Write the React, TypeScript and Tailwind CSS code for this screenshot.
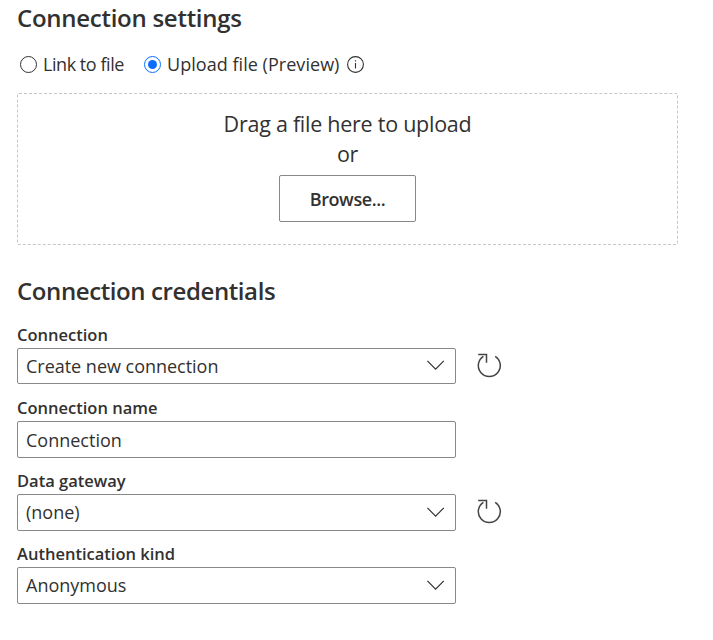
import type { ReactNode } from "react";

function Text({ children, className }: { children: ReactNode; className: string }) {
  return <span className={`block whitespace-nowrap ${className}`}>{children}</span>;
}

function InfoIcon() {
  return (
    <svg width="17" height="17" viewBox="0 0 17 17" fill="none" stroke="#323130" className="ml-[7px] shrink-0">
      <circle cx="8.5" cy="8.5" r="7.9" strokeWidth="1.1" />
      <path d="M8.5 7v5.5M8.5 4.2v1.4" strokeWidth="1.1" />
    </svg>
  );
}

function Chevron({ className }: { className: string }) {
  return (
    <svg width="18" height="11" viewBox="0 0 18 11" fill="none" stroke="#323130" strokeWidth="1.2" className={`mr-[10px] shrink-0 ${className}`}>
      <path d="M.4 .9L8.6 9.2L16.8 .9" />
    </svg>
  );
}

function Refresh() {
  return (
    <svg width="26" height="26" viewBox="0 0 26 26" fill="none" stroke="#454442" strokeWidth="1.5" className="mb-[3px] ml-[20px] shrink-0">
      <path d="M7.4 4.3A11 11 0 1 0 19.2 4.3" />
      <path d="M2.2 2.6H10.5V10.8" />
    </svg>
  );
}

type FieldProps = {
  label: string;
  value: string;
  valueClass?: string;
  boxClass: string;
  chevronClass?: string;
  select?: boolean;
  refresh?: boolean;
};

function Field({ label, value, valueClass = "", boxClass, chevronClass = "", select, refresh }: FieldProps) {
  return (
    <div className="h-[73px]">
      <Text className="h-[24px] text-[16.5px] leading-[22px] font-semibold">{label}</Text>
      <div className="flex items-center">
        <div className={`flex w-[439px] items-center justify-between rounded-[2px] border border-[#8a8886] pl-[8px] ${boxClass}`}>
          <Text className={`text-[18px] leading-[24px] ${valueClass}`}>{value}</Text>
          {select && <Chevron className={chevronClass} />}
        </div>
        {refresh && <Refresh />}
      </div>
    </div>
  );
}

export default function App() {
  return (
    <main className="h-[640px] w-[713px] overflow-hidden bg-white pl-[17px] font-['Open_Sans','Noto_Sans',sans-serif] text-[#323130]">
      <h2 className="h-[38px] pt-[2px] text-[24px] leading-[32px] font-semibold whitespace-nowrap tracking-[-0.27px]">Connection settings</h2>
      <div className="flex h-[53px] items-center pl-[3px]">
        <span className="size-[17px] rounded-full border border-[#323130]" />
        <Text className="ml-[6px] w-[101px] pb-[2px] text-[18px] leading-[24px] tracking-[-0.45px]">Link to file</Text>
        <span className="flex size-[17px] items-center justify-center rounded-full border border-[#0b6cff]">
          <span className="size-[9px] rounded-full bg-[#0b6cff]" />
        </span>
        <Text className="ml-[6px] w-[173px] pb-[2px] text-[18px] leading-[24px] tracking-[0.04px]">Upload file (Preview)</Text>
        <InfoIcon />
      </div>
      <section className="mt-[2px] flex h-[152px] w-[661px] flex-col items-center rounded-[2px] border border-dashed border-[#c8c6c4] pt-[15px]">
        <Text className="text-[21.5px] leading-[30px] tracking-[-0.26px]">Drag a file here to upload</Text>
        <Text className="h-[36px] text-[21.5px] leading-[29px] tracking-[-0.26px]">or</Text>
        <button className="h-[47px] w-[137px] rounded-[2px] border border-[#8a8886] text-[18px] leading-[24px] font-semibold tracking-[-0.4px]">Browse...</button>
      </section>
      <h2 className="mt-[30px] h-[49px] text-[24px] leading-[32px] font-semibold whitespace-nowrap tracking-[-0.4px]">Connection credentials</h2>
      <Field label="Connection" value="Create new connection" valueClass="tracking-[-0.02px]" boxClass="h-[36px]" chevronClass="mb-[1px]" select refresh />
      <Field label="Connection name" value="Connection" boxClass="h-[37px]" />
      <Field label="Data gateway" value="(none)" valueClass="pb-[2px]" boxClass="h-[37px]" select refresh />
      <Field label="Authentication kind" value="Anonymous" valueClass="pb-[2px]" boxClass="h-[37px]" select />
    </main>
  );
}
